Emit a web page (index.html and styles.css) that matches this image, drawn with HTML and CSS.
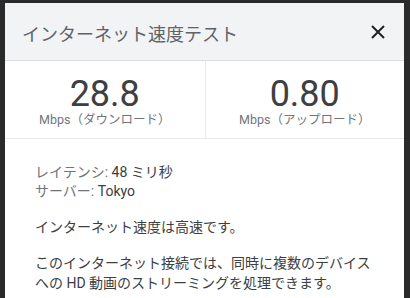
FILE: index.html
```html
<!DOCTYPE html>
<html lang="ja">
<head>
<meta charset="utf-8">
<link rel="stylesheet" href="styles.css">
</head>
<body>
<div class="dialog">
  <div class="header">
    <div class="title">インターネット速度テスト</div>
    <svg class="close" width="14" height="14" viewBox="0 0 14 14"><path d="M1 1L13 13M13 1L1 13" stroke="#202124" stroke-width="2"/></svg>
  </div>
  <div class="stats">
    <div class="stat">
      <div class="num">28.8</div>
      <div class="unit">Mbps（ダウンロード）</div>
    </div>
    <div class="stat">
      <div class="num">0.80</div>
      <div class="unit">Mbps（アップロード）</div>
    </div>
  </div>
  <div class="body">
    <div class="meta">
      <div><span class="label">レイテンシ:</span> <span class="val">48 ミリ秒</span></div>
      <div><span class="label">サーバー:</span> <span class="val">Tokyo</span></div>
    </div>
    <p class="msg">インターネット速度は高速です。</p>
    <p class="msg">このインターネット接続では、同時に複数のデバイスへの HD 動画のストリーミングを処理できます。</p>
  </div>
</div>
</body>
</html>
```
FILE: styles.css
```css
html, body {
  margin: 0;
  padding: 0;
  background: #2a2a2a;
  height: 298px;
  overflow: hidden;
}
body {
  padding: 3px 6px 0 5px;
  box-sizing: border-box;
  font-family: Roboto, "Noto Sans CJK JP", sans-serif;
}
.dialog {
  background: #fff;
  height: 295px;
  overflow: hidden;
}
.header {
  height: 57px;
  background: #f1f3f4;
  border-bottom: 1px solid #dadce0;
  display: flex;
  align-items: center;
  justify-content: space-between;
  padding: 0 19px 0 17px;
}
.title {
  font-size: 18px;
  color: #5f6368;
  padding-top: 2px;
}
.close {
  display: block;
}
.stats {
  display: grid;
  grid-template-columns: 1fr 1fr;
  border-bottom: 1px solid #e8eaed;
}
.stat {
  height: 77px;
  display: flex;
  flex-direction: column;
  align-items: center;
  padding-top: 15px;
  box-sizing: border-box;
}
.stat + .stat {
  border-left: 1px solid #e8eaed;
}
.num {
  font-size: 36px;
  line-height: 36px;
  color: #3c4043;
}
.unit {
  font-size: 12.5px;
  line-height: 16px;
  color: #70757a;
}
.body {
  padding: 24px 30px 0 30px;
  font-size: 14px;
  line-height: 19px;
  color: #3c4043;
}
.label {
  color: #70757a;
}
.msg {
  margin: 16px 0 0 0;
  line-height: 20px;
}
```
